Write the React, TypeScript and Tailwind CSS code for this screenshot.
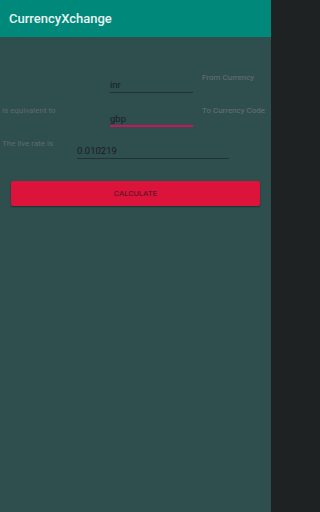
export default function App() {
  return (
    <div className="h-[512px] w-full bg-[#1e2222]">
      <div className="flex h-[512px] w-[274px] bg-[#2f4f4f] font-['Roboto',sans-serif]">
        <div className="flex flex-1 flex-col">
          {/* Toolbar */}
          <div className="flex h-[37px] items-center bg-[#00887a] px-[9px]">
            <span className="text-[13px] font-medium text-[#e9f3f1]">CurrencyXchange</span>
          </div>

          {/* From row */}
          <div className="mt-[36px] grid grid-cols-[110px_83px_1fr] items-start">
            <div />
            <div className="mt-[6px] border-b border-[#1f3333] pb-[1px] text-[9.5px] leading-[12px] text-[#1c1c1c]">inr</div>
            <div className="pl-[9px] text-[8px] leading-[10px] text-[#687272]">From Currency</div>
          </div>

          {/* To row */}
          <div className="mt-[13px] grid grid-cols-[110px_83px_1fr] items-start">
            <div className="pl-[2px] text-[8px] leading-[10px] text-[#5f6a6a]">is equivalent to</div>
            <div className="mt-[7px] border-b-2 border-[#c2185b] text-[9.5px] leading-[12px] text-[#1c1c1c]">gbp</div>
            <div className="pl-[9px] text-[8px] leading-[10px] text-[#687272]">To Currency Code</div>
          </div>

          {/* Rate row */}
          <div className="mt-[12px] grid grid-cols-[77px_152px_1fr] items-start">
            <div className="pl-[2px] text-[8px] leading-[10px] text-[#5f6a6a]">The live rate is</div>
            <div className="mt-[6px] border-b border-[#1f3333] pb-[1px] text-[9.5px] leading-[12px] text-[#1c1c1c]">0.010219</div>
            <div />
          </div>

          {/* Button */}
          <div className="mx-[11px] mt-[22px]">
            <button className="flex h-[25px] w-full items-center justify-center rounded-[2px] bg-[#dc143c] text-[8px] text-[#4a1420] shadow-[0_1px_2px_rgba(0,0,0,0.4)]">
              CALCULATE
            </button>
          </div>
        </div>
        <div className="w-[3px] bg-[#1e2222]" />
      </div>
    </div>
  );
}
